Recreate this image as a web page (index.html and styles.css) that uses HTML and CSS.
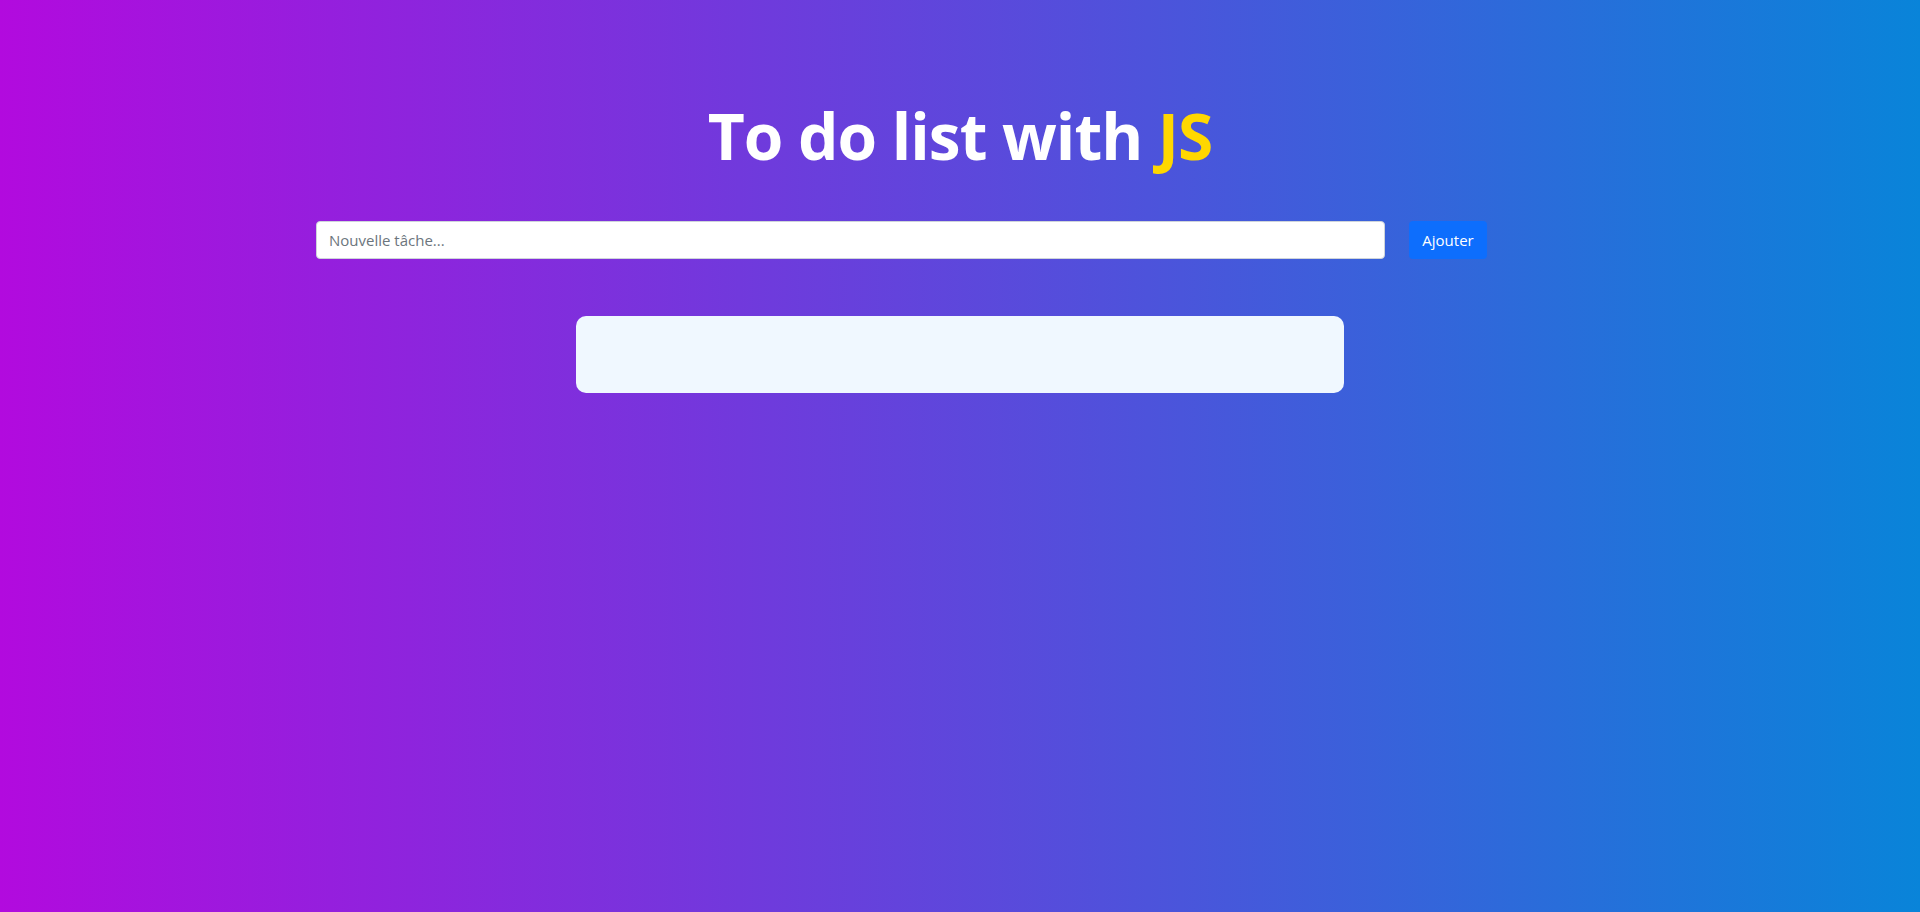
FILE: index.html
```html
<!DOCTYPE html>
<html lang="fr">
<head>
<meta charset="utf-8">
<title>To do list with JS</title>
<link rel="stylesheet" href="styles.css">
</head>
<body>
<main class="page">
  <h1 class="title">To do list with <span class="js">JS</span></h1>
  <form class="todo-form">
    <input class="todo-input" type="text" placeholder="Nouvelle tâche...">
    <button class="btn-add" type="button">Ajouter</button>
  </form>
  <ul class="todo-list"></ul>
</main>
</body>
</html>
```
FILE: styles.css
```css
* { box-sizing: border-box; }
html, body { margin: 0; height: 100%; }
body {
  font-family: "Open Sans", "Noto Sans", "Liberation Sans", sans-serif;
  background: linear-gradient(to right, #b20ade, #0984d9);
  min-height: 912px;
}
.page {
  display: flex;
  flex-direction: column;
  padding-top: 89px;
}
.title {
  margin: 0;
  text-align: center;
  color: #fff;
  font-size: 64px;
  font-weight: 700;
  line-height: 94px;
  letter-spacing: -1px;
}
.js { color: #ffd700; }
.todo-form {
  display: flex;
  gap: 24px;
  margin: 38px 0 0 316px;
  width: 1171px;
}
.todo-input {
  flex: 1;
  height: 38px;
  border: 1px solid #ced4da;
  border-radius: 4px;
  padding: 0 12px;
  font-family: inherit;
  font-size: 15px;
  color: #212529;
  background: #fff;
  outline: none;
}
.todo-input::placeholder { color: #6c757d; }
.btn-add {
  width: 78px;
  height: 38px;
  border: none;
  border-radius: 4px;
  background: #0d6efd;
  color: #fff;
  font-family: inherit;
  font-size: 15px;
  padding: 0;
}
.todo-list {
  align-self: center;
  width: 768px;
  height: 77px;
  margin: 57px 0 0;
  padding: 0;
  list-style: none;
  background: #f0f8ff;
  border-radius: 10px;
}
```
